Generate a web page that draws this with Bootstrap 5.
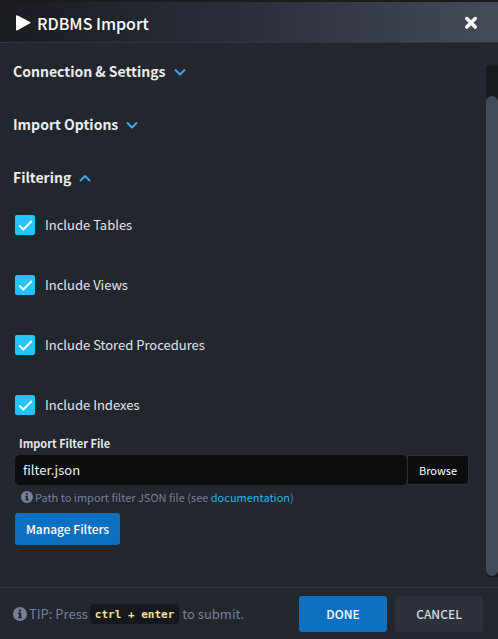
<!DOCTYPE html>
<html lang="en">
<head>
<meta charset="utf-8">
<meta name="viewport" content="width=device-width, initial-scale=1">
<title>RDBMS Import</title>
<link href="https://cdn.jsdelivr.net/npm/bootstrap@5.3.0/dist/css/bootstrap.min.css" rel="stylesheet">
<style>
body{background:#22262d;color:#e4e6e9;font-family:"Noto Sans CJK SC","Noto Sans",sans-serif;font-size:13px;line-height:20px;border-top:2px solid #1b1b1b}
.dialog-head{height:41px;padding:2px 20px 0 16px;background:linear-gradient(90deg,#191c21,#2b2f3a 50%,#454b59);border-bottom:1px solid #2f333d}
.dialog-title{font-size:16px;line-height:24px;font-weight:500;color:#fff;gap:6px}
.close-btn{line-height:0}
.scroll-region{padding:0 17px 0 13px}
.track{width:12px;margin:23px 0 10px;padding:30px 0 1px;background:#16191d}
.thumb{background:#444a58;border-radius:6px}
.section-head{height:53px;font-size:14px;line-height:24px;font-weight:700;color:#eceded;gap:8px}
.sections{padding-top:16px}
.checks{gap:40px;margin:-3px 0 0 2px}
.check-row{gap:10px;height:20px}
.check-row .form-check-input{width:20px;height:20px;border:0;border-radius:2px;background-color:#23c4ff;background-size:20px;background-image:url("data:image/svg+xml,%3Csvg xmlns='http://www.w3.org/2000/svg' viewBox='0 0 20 20'%3E%3Cpath fill='none' stroke='%23fff' stroke-width='2' d='m4.3 10.5 4 4 8.5-8.5'/%3E%3C/svg%3E")}
.file-label{font-size:11px;font-weight:700;margin:18px 0 2px 6px}
.file-row{margin-left:2px;height:30px}
.file-row .form-control{background:#0c0d0f;color:#f0f0f0;border:0;border-radius:5px;font-size:13px;padding:0 8px}
.file-row .btn{width:62px;background:#0c0d0f;color:#fff;border:1px solid #2b2f3a;border-radius:0 3px 3px 0;font-size:11px;padding:0}
.hint{font-size:11px;color:#79809a;margin:2px 0 6px 8px;gap:2px}
.hint a{color:#20b7ea}
.btn-blue{background:#0d70bf;color:#fff}
.manage{width:105px;height:32px;margin-left:2px;padding:0;font-size:12px;font-weight:500;border:0;border-radius:3px}
.dialog-foot{height:52px;padding:0 15px 0 13px;border-top:1px solid #30343e}
.tip{color:#79809a;gap:2px}
.tip code{font:700 11px/19px "DejaVu Sans Mono",monospace;color:#f5e29b;background:#15181c;border-radius:4px;padding:1px 5px 0;margin-right:1px}
.foot-btn{width:88px;height:36px;padding:0;border:0;border-radius:3px;font-size:12px;font-weight:500}
.btn-grey{background:#2c303b;color:#d8dadd}
</style>
<script defer src="https://cdn.jsdelivr.net/npm/bootstrap@5.3.0/dist/js/bootstrap.bundle.min.js"></script>
</head>
<body class="d-flex flex-column min-vh-100">
<header class="dialog-head d-flex align-items-center justify-content-between">
  <h1 class="dialog-title d-flex align-items-center mb-0">
    <svg width="15" height="16" viewBox="0 0 15 16" aria-hidden="true"><path fill="#fff" d="M0 1.500Q0-.2 1.600.6l12 6.200q1.500.9 0 1.800l-12 6.600Q0 16 0 14.400z"/></svg>RDBMS Import
  </h1>
  <button type="button" class="close-btn btn p-0 border-0" aria-label="Close"><svg width="14" height="14" viewBox="0 0 14 14"><path fill="none" stroke="#fff" stroke-width="3.600" stroke-linecap="round" d="m2.800 2.600 8.400 8.400m0-8.400-8.400 8.400"/></svg></button>
</header>
<main class="d-flex flex-grow-1">
  <div class="scroll-region flex-grow-1">
    <div class="sections">
      <button type="button" class="section-head btn p-0 border-0 d-flex align-items-start">Connection &amp; Settings<svg class="mt-2" width="12" height="12" viewBox="0 0 12 12" aria-hidden="true"><path fill="none" stroke="#42a5f5" stroke-width="2" stroke-linecap="round" stroke-linejoin="round" d="M1.500 3 6 7.500 10.500 3"/></svg></button>
      <button type="button" class="section-head btn p-0 border-0 d-flex align-items-start">Import Options<svg class="mt-2" width="12" height="12" viewBox="0 0 12 12" aria-hidden="true"><path fill="none" stroke="#42a5f5" stroke-width="2" stroke-linecap="round" stroke-linejoin="round" d="M1.500 3 6 7.500 10.500 3"/></svg></button>
      <button type="button" class="section-head btn p-0 border-0 d-flex align-items-start">Filtering<svg class="mt-2" width="12" height="12" viewBox="0 0 12 12" aria-hidden="true"><path fill="none" stroke="#42a5f5" stroke-width="2" stroke-linecap="round" stroke-linejoin="round" d="M1.500 7.500 6 3l4.500 4.500"/></svg></button>
    </div>
    <div class="checks d-flex flex-column">
      <div class="check-row d-flex align-items-center"><input class="form-check-input m-0" type="checkbox" id="tables" checked><label for="tables">Include Tables</label></div>
      <div class="check-row d-flex align-items-center"><input class="form-check-input m-0" type="checkbox" id="views" checked><label for="views">Include Views</label></div>
      <div class="check-row d-flex align-items-center"><input class="form-check-input m-0" type="checkbox" id="procs" checked><label for="procs">Include Stored Procedures</label></div>
      <div class="check-row d-flex align-items-center"><input class="form-check-input m-0" type="checkbox" id="indexes" checked><label for="indexes">Include Indexes</label></div>
    </div>
    <label class="file-label d-block" for="file">Import Filter File</label>
    <div class="file-row d-flex">
      <input class="form-control" type="text" id="file" value="filter.json">
      <button type="button" class="btn flex-shrink-0">Browse</button>
    </div>
    <div class="hint d-flex align-items-center">
      <svg width="12" height="12" viewBox="0 0 14 14" aria-hidden="true"><circle cx="7" cy="7" r="7" fill="#79809a"/><path fill="#22262d" d="M5.900 2.400h2.200v2H5.900zM5 5.500h3.200v4.200H9v1.500H5V9.700h.9V7H5z"/></svg>
      <span>Path to import filter JSON file (see <a href="#" class="text-decoration-none">documentation</a>)</span>
    </div>
    <button type="button" class="btn btn-blue manage">Manage Filters</button>
  </div>
  <div class="track d-flex flex-column flex-shrink-0" aria-hidden="true"><div class="thumb flex-grow-1"></div></div>
</main>
<footer class="dialog-foot d-flex align-items-center justify-content-between">
  <div class="tip d-flex align-items-center">
    <svg width="14" height="14" viewBox="0 0 14 14" aria-hidden="true"><circle cx="7" cy="7" r="7" fill="#79809a"/><path fill="#22262d" d="M5.900 2.400h2.200v2H5.900zM5 5.500h3.200v4.200H9v1.500H5V9.700h.9V7H5z"/></svg>
    <span>TIP: Press</span><code>ctrl + enter</code><span>to submit.</span>
  </div>
  <div class="d-flex gap-2">
    <button type="button" class="btn btn-blue foot-btn">DONE</button>
    <button type="button" class="btn btn-grey foot-btn">CANCEL</button>
  </div>
</footer>
</body>
</html>
